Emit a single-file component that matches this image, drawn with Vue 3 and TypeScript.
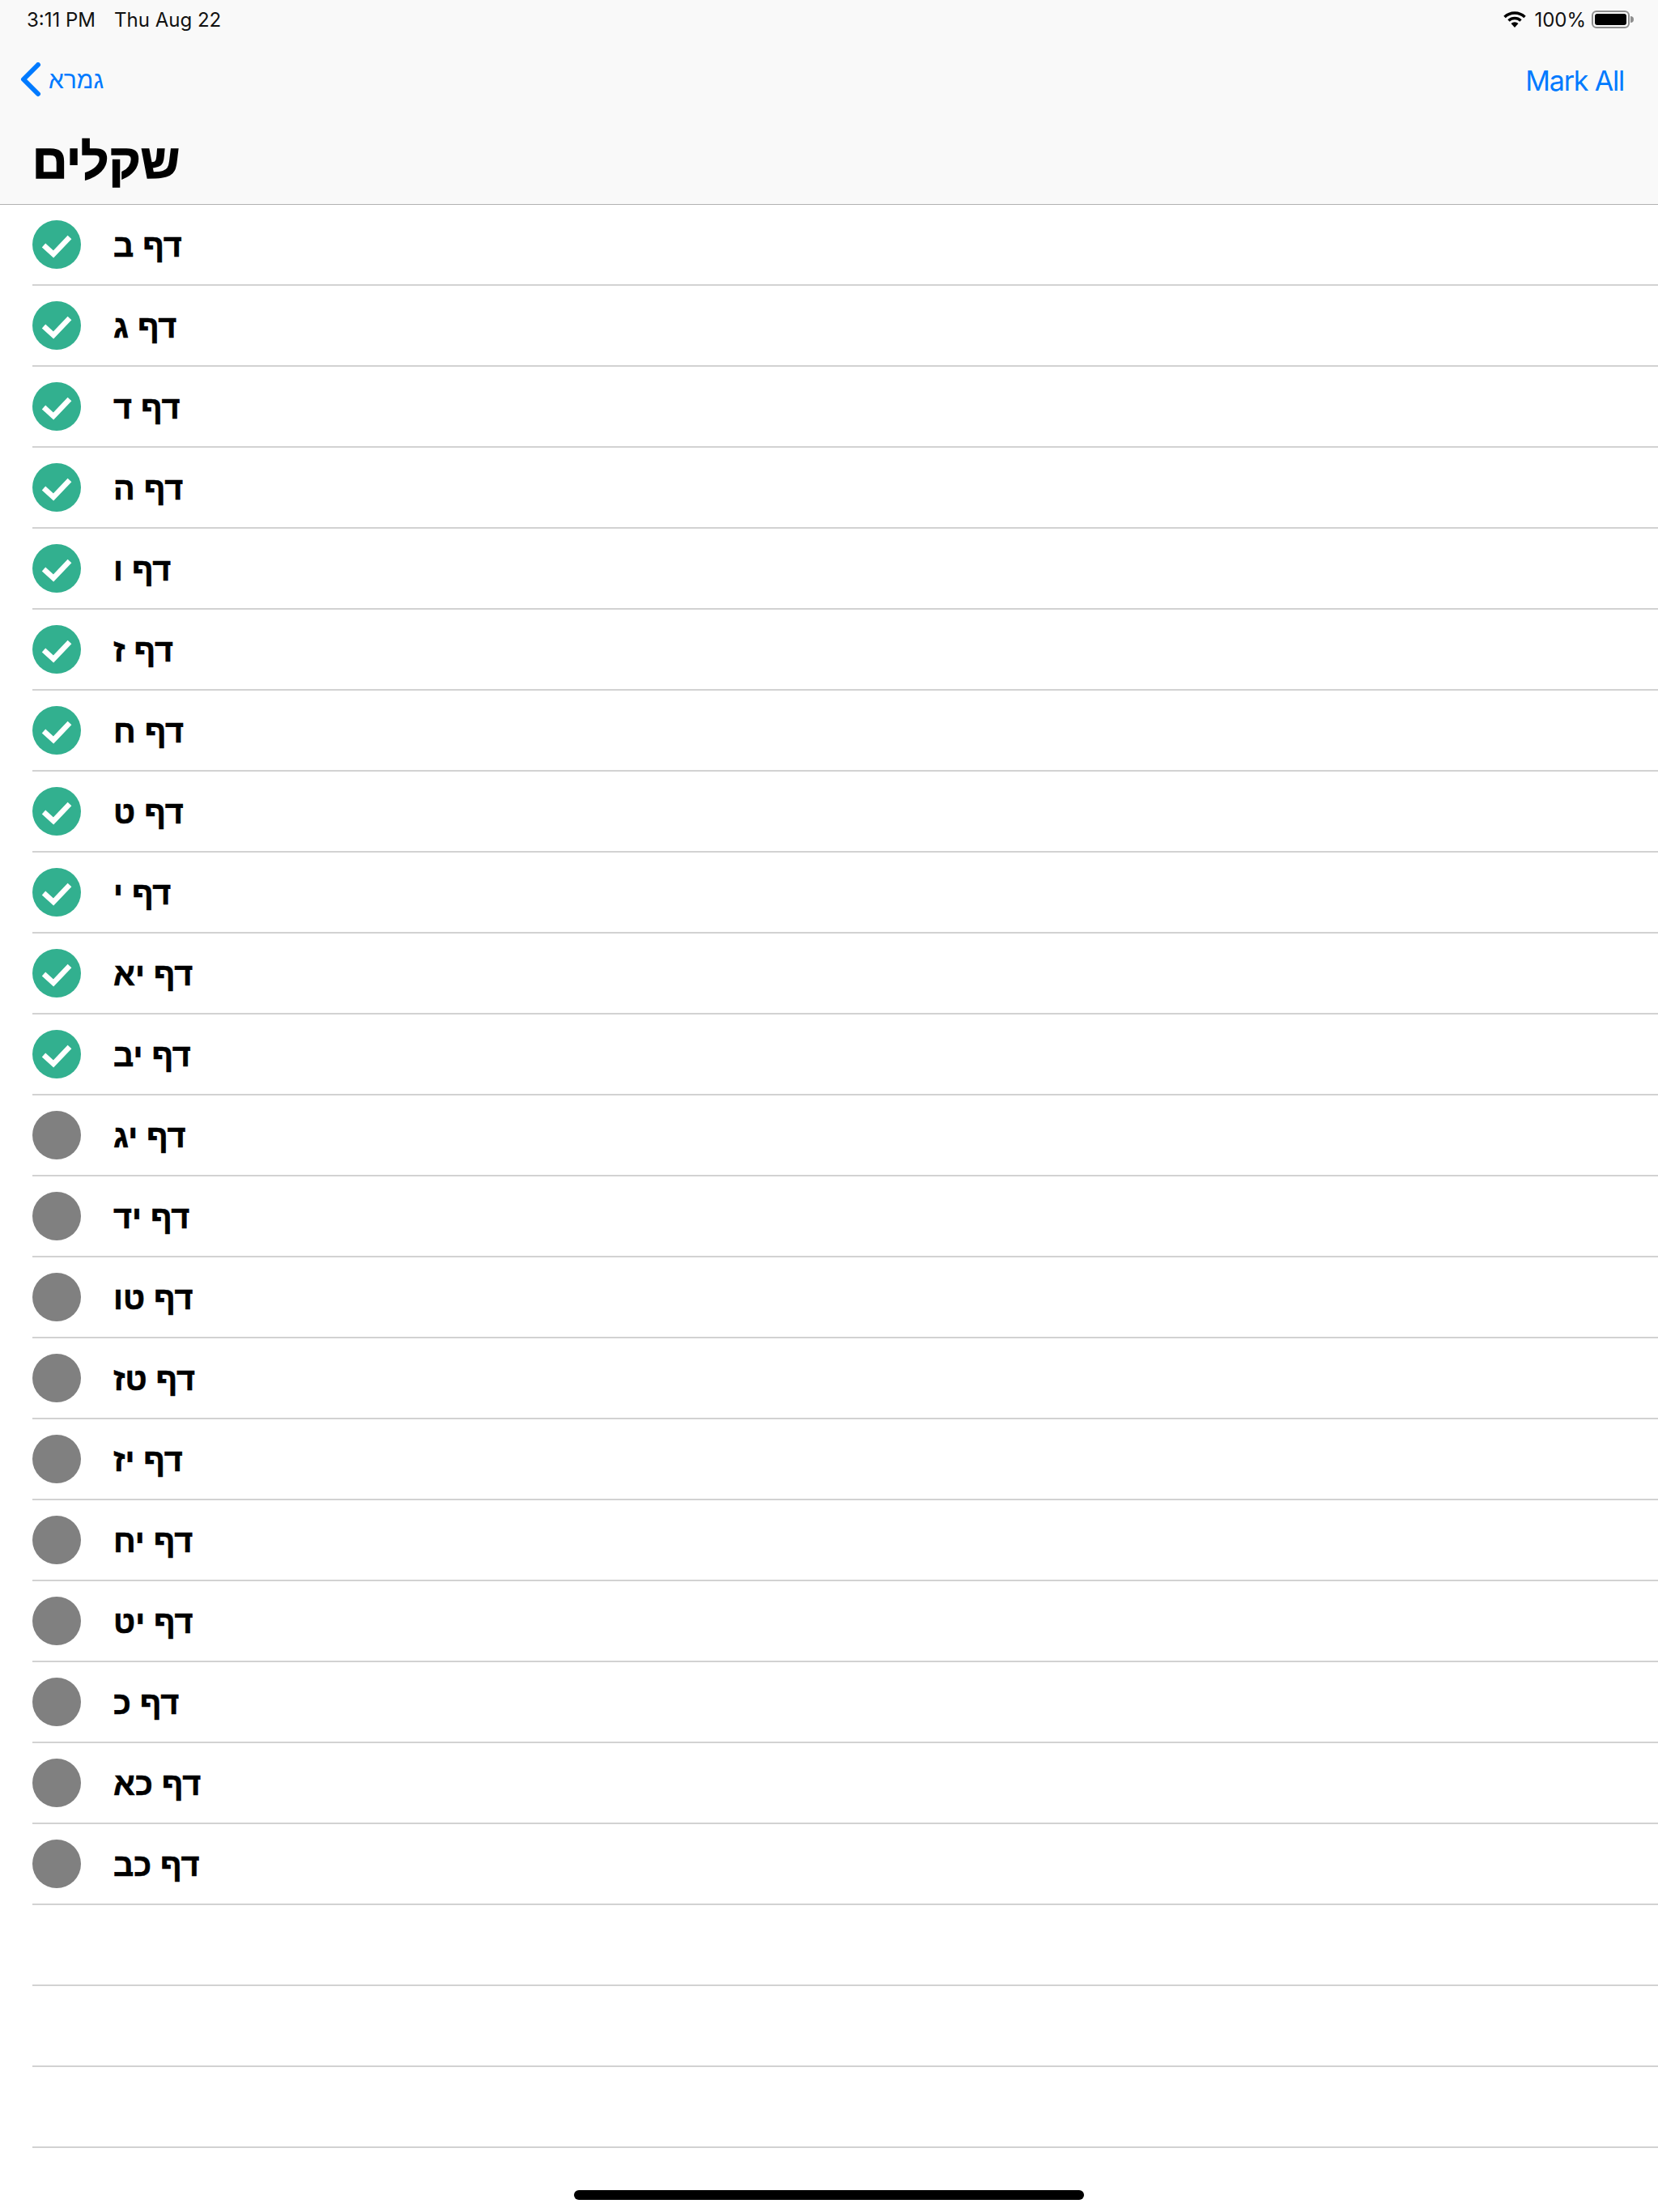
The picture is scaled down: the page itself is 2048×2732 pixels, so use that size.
<script setup lang="ts">
const letters = ['ב', 'ג', 'ד', 'ה', 'ו', 'ז', 'ח', 'ט', 'י', 'יא', 'יב', 'יג', 'יד', 'טו', 'טז', 'יז', 'יח', 'יט', 'כ', 'כא', 'כב']
const doneCount = 11
const emptyRows = 3
</script>

<template>
  <div class="page">
    <header class="top">
      <div class="status">
        <div class="status-left">
          <span>3:11 PM</span>
          <span>Thu Aug 22</span>
        </div>
        <div class="status-right">
          <svg class="wifi" width="30" height="20" viewBox="0 0 30 20">
            <path d="M2.500 7 A18 18 0 0 1 27.500 7" fill="none" stroke="#000" stroke-width="3.500" />
            <path d="M7.500 11.500 A11 11 0 0 1 22.500 11.500" fill="none" stroke="#000" stroke-width="3.500" />
            <path d="M15 20 L10.500 15 A7 7 0 0 1 19.500 15 Z" fill="#000" />
          </svg>
          <span class="pct">100%</span>
          <div class="battery">
            <div class="battery-body"><div class="battery-fill"></div></div>
            <div class="battery-nub"></div>
          </div>
        </div>
      </div>
      <nav class="nav">
        <a class="back">
          <svg width="28" height="44" viewBox="0 0 28 44">
            <path d="M22 3 L4 21 L22 39" fill="none" stroke="#007aff" stroke-width="6" stroke-linecap="round" stroke-linejoin="round" />
          </svg>
          <span class="back-label" dir="rtl">גמרא</span>
        </a>
        <a class="mark">Mark All</a>
      </nav>
      <h1 class="title" dir="rtl">שקלים</h1>
    </header>

    <ul class="list">
      <li v-for="(letter, i) in letters" :key="letter" class="row">
        <span class="dot" :class="{ done: i < doneCount }">
          <svg v-if="i < doneCount" width="60" height="60" viewBox="0 0 60 60">
            <path d="M14 31 L26 42 L46 21" fill="none" stroke="#fff" stroke-width="6.500" />
          </svg>
        </span>
        <span class="label" dir="rtl">דף {{ letter }}</span>
      </li>
      <li v-for="n in emptyRows" :key="'empty' + n" class="row"></li>
    </ul>

    <div class="home-bar"></div>
  </div>
</template>

<style>
html,
body {
  margin: 0;
  background: #fff;
}
</style>

<style scoped>
.page {
  position: relative;
  width: 2048px;
  height: 2732px;
  overflow: hidden;
  background: #fff;
  font-family: "Liberation Sans", sans-serif;
  color: #000;
}

.top {
  height: 252px;
  background: #f9f9f9;
  border-bottom: 1px solid #b2b2b2;
}

.status {
  height: 48px;
  padding: 0 30px 0 33px;
  display: flex;
  justify-content: space-between;
  align-items: center;
  font-family: Inter, sans-serif;
  font-size: 24px;
  color: #111;
}

.status-left {
  display: flex;
  gap: 23px;
}

.status-right {
  display: flex;
  align-items: center;
}

.wifi {
  margin-right: 9px;
}

.pct {
  margin-right: 7px;
}

.battery {
  display: flex;
  align-items: center;
  gap: 1px;
}

.battery-body {
  box-sizing: border-box;
  width: 47px;
  height: 22px;
  padding: 2px;
  border: 2px solid #8e8e8e;
  border-radius: 6px;
}

.battery-fill {
  height: 100%;
  background: #000;
  border-radius: 3px;
}

.battery-nub {
  width: 4px;
  height: 8px;
  background: #8e8e8e;
  border-radius: 0 4px 4px 0;
}

.nav {
  height: 102px;
  padding: 0 42px 0 25px;
  display: flex;
  justify-content: space-between;
  align-items: center;
}

.back {
  display: flex;
  align-items: center;
  gap: 7px;
  color: #007aff;
}

.back-label {
  font-size: 30px;
}

.mark {
  font-family: Inter, sans-serif;
  font-size: 34px;
  letter-spacing: -1.2px;
  color: #007aff;
}

.title {
  margin: 0;
  padding: 10px 0 0 40px;
  width: max-content;
  font-size: 60px;
  font-weight: 700;
  line-height: 80px;
  -webkit-text-stroke: 1.5px #000;
}

.list {
  margin: 0;
  padding: 0 0 0 40px;
  list-style: none;
}

.row {
  box-sizing: border-box;
  height: 100px;
  border-bottom: 2px solid #d2d2d2;
  display: flex;
  align-items: center;
  gap: 40px;
}

.dot {
  width: 60px;
  height: 60px;
  border-radius: 50%;
  background: #808080;
}

.dot.done {
  background: #32b08f;
}

.dot svg {
  display: block;
}

.label {
  padding-top: 3px;
  font-size: 39.500px;
  font-weight: 700;
  width: max-content;
  -webkit-text-stroke: 0.6px #000;
}

.home-bar {
  position: absolute;
  left: 709px;
  top: 2705px;
  width: 630px;
  height: 12px;
  border-radius: 6px;
  background: #000;
}
</style>
